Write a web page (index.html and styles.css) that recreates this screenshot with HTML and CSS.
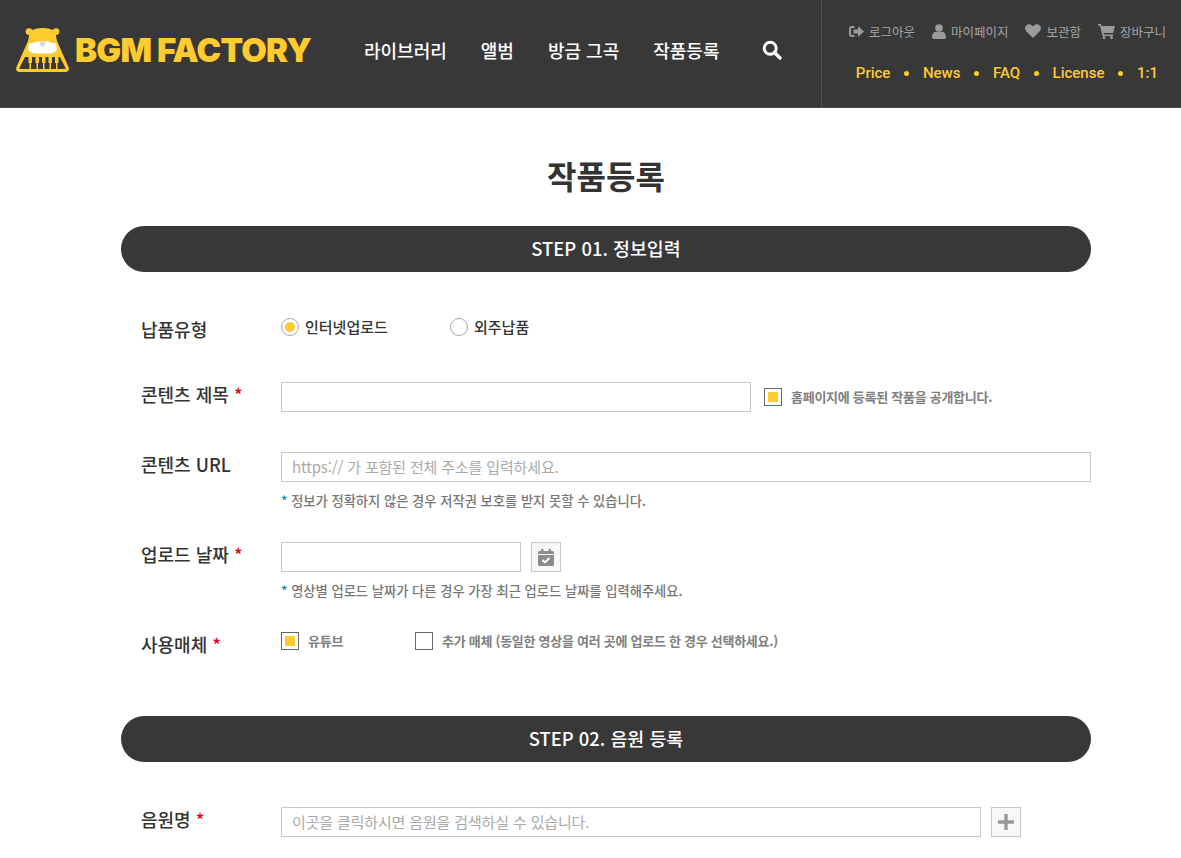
FILE: index.html
```html
<!DOCTYPE html>
<html lang="ko">
<head>
  <meta charset="UTF-8" />
  <title>BGM FACTORY 작품등록</title>
  <link rel="stylesheet" href="styles.css">
</head>
<body>
  <header class="header">
    <a class="logo" href="#">
      <svg class="logo-mark" width="53" height="44" viewBox="0 0 53 44">
        <circle cx="13" cy="3.6" r="3.4" fill="#ffcb2f"/>
        <circle cx="40" cy="3.6" r="3.4" fill="#ffcb2f"/>
        <path fill="#ffcb2f" d="M14 3c3.500-2 8-3 12.500-3S35.500 1 39 3l2 10 11.500 26c1.200 2.600-.3 5-3 5H3.500c-2.700 0-4.200-2.400-3-5L12 13z"/>
        <path fill="#fff" d="M13 15c3 .5 5.500-.2 8-1.500h11c2.500 1.300 5 2 8 1.500l1 7c-2 2.500-5 3.500-8 3.500H20c-3 0-6-1-8-3.500z"/>
        <path fill="#d8d8d8" d="M23.500 13.500h6l-1 4.500-2 1-2-1z"/>
        <path fill="#383838" d="M9 29h35l5.500 11c.3.700 0 1-.7 1H4.200c-.7 0-1-.3-.7-1z"/>
        <path fill="#ffcb2f" d="M12.500 29H16v6h-1v6h-1.500v-6h-1zM19.500 29H23v6h-1v6h-1.500v-6h-1zM26 29h3.500v6h-1v6H27v-6h-1zM32.500 29H36v6h-1v6h-1.500v-6h-1zM39 29h3.500v6h-1v6H40v-6h-1z"/>
      </svg>
      <span class="logo-text">BGM FACTORY</span>
    </a>
    <nav class="gnb">
      <a href="#">라이브러리</a>
      <a href="#">앨범</a>
      <a href="#">방금 그곡</a>
      <a href="#">작품등록</a>
      <svg class="search-icon" width="20" height="20" viewBox="0 0 20 20">
        <circle cx="8.200" cy="8.200" r="6" fill="none" stroke="#fff" stroke-width="3"/>
        <path d="M12.500 12.500l5.500 5.500" stroke="#fff" stroke-width="3.400" stroke-linecap="round"/>
      </svg>
    </nav>
    <div class="util">
      <div class="util-top">
        <a href="#">
          <svg width="15" height="13" viewBox="0 0 15 13"><path fill="#9b9b9b" d="M5.500 1H3a3 3 0 0 0-3 3v5a3 3 0 0 0 3 3h2.500v-2H3a1 1 0 0 1-1-1V4a1 1 0 0 1 1-1h2.500z"/><path fill="#9b9b9b" d="M9 1l6 5.500L9 12V8.500H4.500v-4H9z"/></svg>
          로그아웃
        </a>
        <a href="#">
          <svg width="14" height="15" viewBox="0 0 14 15"><circle cx="7" cy="4" r="3.800" fill="#9b9b9b"/><path fill="#9b9b9b" d="M0 13c0-3.500 2-5.200 3.800-5.200h6.400C12 7.800 14 9.500 14 13c0 1.300-.8 2-2 2H2c-1.200 0-2-.7-2-2z"/></svg>
          마이페이지
        </a>
        <a href="#">
          <svg width="16" height="14" viewBox="0 0 16 14"><path fill="#9b9b9b" d="M8 14L1.200 7.300C-.4 5.600-.4 3 1.200 1.400 2.800-.2 5.400-.2 7 1.400l1 1 1-1c1.600-1.600 4.200-1.600 5.800 0 1.600 1.600 1.600 4.200 0 5.900z"/></svg>
          보관함
        </a>
        <a href="#">
          <svg width="17" height="15" viewBox="0 0 17 15"><path fill="#9b9b9b" d="M0 0h3l.6 2H17l-1.800 7H5.500l.3 1.500H15V12H4.500L2 1.500H0z"/><circle cx="6" cy="13.500" r="1.500" fill="#9b9b9b"/><circle cx="13.500" cy="13.500" r="1.500" fill="#9b9b9b"/></svg>
          장바구니
        </a>
      </div>
      <div class="util-bottom">
        <a href="#">Price</a><i></i>
        <a href="#">News</a><i></i>
        <a href="#">FAQ</a><i></i>
        <a href="#">License</a><i></i>
        <a href="#">1:1</a>
      </div>
    </div>
  </header>

  <main class="container">
    <h1 class="page-title">작품등록</h1>

    <h2 class="step-bar">STEP 01. 정보입력</h2>
    <section class="step-form">
      <div class="row row-type">
        <div class="row-label">납품유형</div>
        <div class="row-body inline">
          <label class="radio checked type-first"><span class="radio-dot"></span>인터넷업로드</label>
          <label class="radio"><span class="radio-dot"></span>외주납품</label>
        </div>
      </div>
      <div class="row row-title">
        <div class="row-label">콘텐츠 제목 <em>*</em></div>
        <div class="row-body inline">
          <input class="field field-title" type="text">
          <label class="check checked check-public"><span class="box"></span>홈페이지에 등록된 작품을 공개합니다.</label>
        </div>
      </div>
      <div class="row row-url">
        <div class="row-label">콘텐츠 URL</div>
        <div class="row-body">
          <input class="field field-full" type="text" placeholder="https:// 가 포함된 전체 주소를 입력하세요.">
          <p class="note"><b>*</b> 정보가 정확하지 않은 경우 저작권 보호를 받지 못할 수 있습니다.</p>
        </div>
      </div>
      <div class="row row-date">
        <div class="row-label">업로드 날짜 <em>*</em></div>
        <div class="row-body">
          <div class="inline">
            <input class="field field-date" type="text">
            <button class="square-btn" type="button">
              <svg width="16" height="17" viewBox="0 0 16 17"><path fill="#8c8c8c" d="M3 0h2.500v2h5V0H13v2h1.500c.8 0 1.500.7 1.500 1.500V5H0V3.500C0 2.700.7 2 1.500 2H3zM0 6h16v9.500c0 .8-.7 1.500-1.500 1.500h-13C.7 17 0 16.300 0 15.500z"/><path d="M4.500 11l2.500 2.500 4.500-4.500" fill="none" stroke="#fff" stroke-width="1.800"/></svg>
            </button>
          </div>
          <p class="note"><b>*</b> 영상별 업로드 날짜가 다른 경우 가장 최근 업로드 날짜를 입력해주세요.</p>
        </div>
      </div>
      <div class="row row-media">
        <div class="row-label">사용매체 <em>*</em></div>
        <div class="row-body inline">
          <label class="check checked media-first"><span class="box"></span>유튜브</label>
          <label class="check"><span class="box"></span>추가 매체 (동일한 영상을 여러 곳에 업로드 한 경우 선택하세요.)</label>
        </div>
      </div>
    </section>

    <h2 class="step-bar">STEP 02. 음원 등록</h2>
    <section class="step-form">
      <div class="row row-music">
        <div class="row-label">음원명 <em>*</em></div>
        <div class="row-body inline">
          <input class="field field-music" type="text" placeholder="이곳을 클릭하시면 음원을 검색하실 수 있습니다.">
          <button class="square-btn" type="button">
            <svg width="16" height="16" viewBox="0 0 16 16"><path fill="#999" d="M6.300 0h3.400v6.300H16v3.400H9.700V16H6.300V9.700H0V6.300h6.300z"/></svg>
          </button>
        </div>
      </div>
    </section>
  </main>
</body>
</html>
```

FILE: styles.css
```css
:root {
  --dark: #383838;
  --yellow: #ffcb2f;
  --line: #c8c8c8;
}
* { box-sizing: border-box; }
html, body { height: 858px; overflow: hidden; }
body {
  margin: 0;
  background: #fff;
  color: #333;
  font-family: "Noto Sans CJK KR", "Noto Sans", sans-serif;
}
a { color: inherit; text-decoration: none; }

/* header */
.header {
  display: flex;
  height: 108px;
  background: var(--dark);
  border-bottom: 1px solid #4a4a4a;
}
.logo {
  display: flex;
  align-items: center;
  width: 364px;
  padding: 0 0 7px 16px;
}
.logo-mark { flex: none; margin-right: 6px; }
.logo-text {
  color: var(--yellow);
  font-family: Inter, "Liberation Sans", sans-serif;
  font-size: 33px;
  font-weight: 900;
  letter-spacing: -.75px;
  white-space: nowrap;
}
.gnb {
  display: flex;
  align-items: center;
  width: 457px;
  padding-bottom: 8px;
  color: #fff;
  font-size: 18px;
  font-weight: 500;
}
.gnb a { margin-right: 34px; white-space: nowrap; }
.search-icon { margin-left: 9px; }
.util {
  flex: 1;
  border-left: 1px solid #505050;
  padding: 20px 15px 0 0;
}
.util-top {
  display: flex;
  justify-content: flex-end;
  gap: 17px;
  height: 22px;
  color: #a5a5a5;
  font-size: 12.5px;
}
.util-top a { display: flex; align-items: center; gap: 5px; white-space: nowrap; }
.util-bottom {
  display: flex;
  justify-content: flex-end;
  align-items: center;
  margin-top: 22px;
  padding-right: 8px;
  color: var(--yellow);
  font-family: Roboto, sans-serif;
  font-size: 15px;
  font-weight: 500;
}
.util-bottom i {
  width: 5px;
  height: 5px;
  margin: 0 13.75px;
  border-radius: 50%;
  background: var(--yellow);
}

/* content */
.container { width: 970px; margin-left: 121px; }
.page-title {
  margin: 0;
  padding-top: 41px;
  height: 118px;
  color: #333;
  font-size: 32px;
  font-weight: 700;
  line-height: 52px;
  text-align: center;
}
.step-bar {
  height: 46px;
  margin: 0;
  border-radius: 23px;
  background: var(--dark);
  color: #fff;
  font-size: 18.4px;
  font-weight: 500;
  line-height: 45px;
  text-align: center;
}
.step-form { padding: 0 0 0 20px; }
.step-form:first-of-type { height: 444px; }
.row { display: flex; }
.row-label {
  flex: none;
  width: 140px;
  color: #333;
  font-size: 18px;
  font-weight: 500;
  line-height: 24px;
}
.row-label em { color: #e60012; font-style: normal; }
.row-body { flex: 1; min-width: 0; }
.inline { display: flex; align-items: center; }

.row-type { padding-top: 44px; height: 110px; }
.row-type .row-label { padding-top: 1px; }
.row-type .row-body { height: 22px; }
.row-title { height: 70px; }
.row-title .row-body { height: 30px; }
.row-url { height: 90px; }
.row-date { height: 90px; }
.row-music { padding-top: 45px; }

.field {
  height: 30px;
  border: 1px solid var(--line);
  border-radius: 0;
  padding: 0 10px 2px;
  background: #fff;
  font: 400 15px "Noto Sans CJK KR", sans-serif;
  letter-spacing: -.15px;
  outline: none;
}
.field::placeholder { color: #aaa; opacity: 1; }
.field-title { width: 470px; }
.field-full { display: block; width: 810px; }
.field-date { width: 240px; }
.field-music { width: 700px; }

.square-btn {
  display: flex;
  align-items: center;
  justify-content: center;
  width: 30px;
  height: 30px;
  margin-left: 10px;
  border: 1px solid var(--line);
  background: #f8f8f8;
  padding: 0;
}
.note {
  margin: 9px 0 0;
  color: #777;
  font-size: 13.27px;
  font-weight: 500;
  line-height: 20px;
}
.note b { color: #1f7fc4; font-weight: 500; }

.radio {
  display: flex;
  align-items: center;
  color: #333;
  font-size: 15px;
  font-weight: 500;
  line-height: 20px;
}
.radio-dot {
  display: flex;
  align-items: center;
  justify-content: center;
  width: 18px;
  height: 18px;
  margin-right: 6px;
  border: 1px solid #aaa;
  border-radius: 50%;
}
.radio.checked .radio-dot::after {
  content: "";
  width: 10px;
  height: 10px;
  border-radius: 50%;
  background: var(--yellow);
}
.type-first { width: 169px; }

.check {
  display: flex;
  align-items: center;
  color: #808080;
  font-size: 13px;
  font-weight: 700;
  letter-spacing: -.27px;
  line-height: 18px;
}
.box {
  flex: none;
  display: flex;
  align-items: center;
  justify-content: center;
  width: 18px;
  height: 18px;
  margin-right: 9px;
  border: 1px solid #666;
}
.check.checked .box::after {
  content: "";
  width: 10px;
  height: 10px;
  background: var(--yellow);
}
.check-public { margin-left: 13px; }
.media-first { width: 134px; }
.row-media .row-body { height: 20px; align-items: flex-start; }
```
